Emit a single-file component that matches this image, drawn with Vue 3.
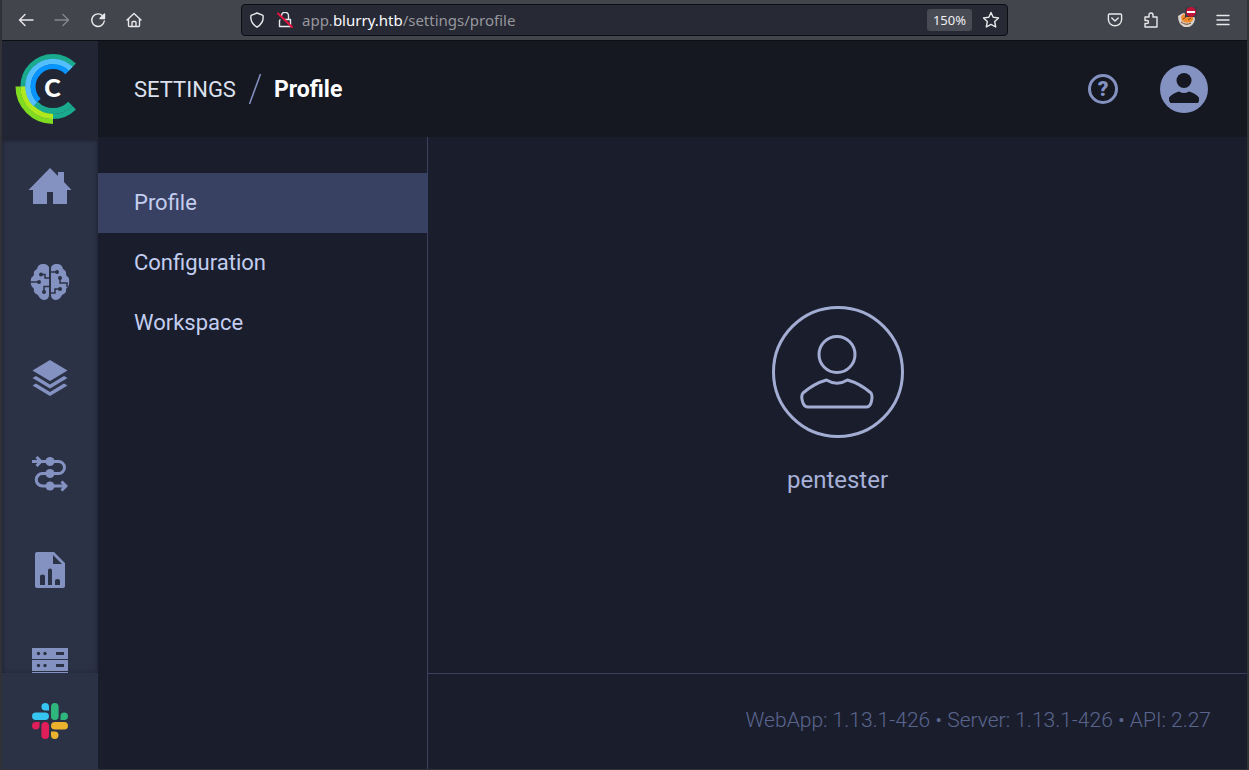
<script setup>
import { ref } from 'vue'

const address = ref('app.blurry.htb/settings/profile')
const pages = ['Profile', 'Configuration', 'Workspace']
const current = ref('Profile')
</script>

<template>
  <div class="window">
    <header class="toolbar">
      <div class="tools">
        <button class="tool" aria-label="Back">
          <svg width="16" height="16" viewBox="0 0 16 16"><path d="M15 8H2M7 2.500L1.500 8L7 13.500" /></svg>
        </button>
        <button class="tool faded" aria-label="Forward">
          <svg width="16" height="16" viewBox="0 0 16 16"><path d="M1 8H14M9 2.500L14.500 8L9 13.500" /></svg>
        </button>
        <button class="tool" aria-label="Reload">
          <svg width="16" height="16" viewBox="0 0 16 16"><path d="M12.800 4A6.300 6.300 0 1 0 14.300 9" /><path class="solid" d="M14.500 2V6.500H10Z" /></svg>
        </button>
        <button class="tool" aria-label="Home">
          <svg width="16" height="16" viewBox="0 0 16 16"><path d="M1 8L8 1.500L15 8M2.500 7V13.500Q2.500 14.500 3.500 14.500H12.500Q13.500 14.500 13.500 13.500V7M6 14.500V10.500Q6 9.500 7 9.500H9Q10 9.500 10 10.500V14.500" /></svg>
        </button>
      </div>

      <div class="address">
        <svg class="glyph" width="16" height="16" viewBox="0 0 16 16"><path d="M8 1L14 3.300Q15.200 10.800 8 15.200Q0.800 10.800 2 3.300Z" /></svg>
        <svg class="glyph lock" width="16" height="16" viewBox="0 0 16 16"><path d="M4.500 4V3.800A3.500 3.500 0 0 1 11.500 3.800V7M3 8Q2.500 8 2.500 8.800V14.500H13.500V7.500H8" /><path class="strike" d="M1 1.500L15 15" /></svg>
        <a class="url" href="#" :aria-label="address">app.<b>blurry.htb</b>/settings/profile</a>
        <button class="zoom">150%</button>
        <button class="tool star" aria-label="Bookmark">
          <svg width="18" height="18" viewBox="0 0 18 18"><path d="M9 1.500L11.200 6.200L16.500 6.900L12.700 10.600L13.700 16L9 13.400L4.300 16L5.300 10.600L1.500 6.900L6.800 6.200Z" /></svg>
        </button>
      </div>

      <div class="tools right">
        <button class="tool" aria-label="Save to Pocket">
          <svg width="16" height="16" viewBox="0 0 16 16"><path d="M2.500 2H13.500Q14.600 2 14.600 3.200V7.500A6.600 6.300 0 0 1 1.400 7.500V3.200Q1.400 2 2.500 2ZM4.800 6L8 9L11.200 6" /></svg>
        </button>
        <button class="tool" aria-label="Extensions">
          <svg width="16" height="16" viewBox="0 0 16 16"><path d="M2 5H6V3Q6 1 8 1T10 3V5H14V15H2V11.500H4Q5.500 11.500 5.500 10T4 8.500H2Z" /></svg>
        </button>
        <button class="tool" aria-label="Proxy switcher">
          <svg width="20" height="22" viewBox="0 0 20 22" class="paint">
            <path d="M1 9L6 6L17 9L18 12Q17 18 12 20H7Q1 17 1 9Z" fill="#d9d3ce" />
            <path d="M4 10L6 7L10 9L16 9Q17 13 14 15Q9 17 5 14Z" fill="#f08c2e" />
            <path d="M6 12L9 10M11 13L14 11M4 15Q9 19 14 16" stroke="#754527" fill="none" />
            <path d="M8 0H20V10H8Z" fill="#3a3d43" />
            <circle cx="14" cy="5" r="5" fill="#c01338" />
            <path d="M10 4H18V6H10Z" fill="#fff" />
          </svg>
        </button>
        <button class="tool" aria-label="Menu">
          <svg width="16" height="16" viewBox="0 0 16 16"><path d="M2 3.500H14M2 8H14M2 12.500H14" /></svg>
        </button>
      </div>
    </header>

    <div class="app">
      <aside class="rail">
        <a class="logo" href="#" aria-label="Dashboard home">
          <svg width="96" height="96" viewBox="2 41 96 96">
            <g fill="none">
              <path d="M74.200 65.300A30 30 0 1 0 74.200 107.700" stroke="#1aaa8d" stroke-width="5" />
              <path d="M70.300 69.200A24.600 24.600 0 0 0 53 61.900" stroke="#1aaa8d" stroke-width="6" />
              <path d="M35.600 103.900A24.600 24.600 0 0 0 70.400 103.900" stroke="#1aaa8d" stroke-width="6.200" />
              <path d="M18 86.500A35 35 0 0 0 53 121.500" stroke="#80dc20" stroke-width="5" />
              <path d="M23 86.500A30 30 0 0 0 53 116.500" stroke="#b0e81e" stroke-width="5.200" />
              <path d="M70.700 68.800A25 25 0 1 0 35.300 104.200" stroke="#53bfff" stroke-width="5.600" />
              <path d="M67.100 72.400A19.900 19.900 0 1 0 38.900 100.600" stroke="#0794ff" stroke-width="5" />
            </g>
            <text class="initial" x="52.500" y="97" text-anchor="middle">C</text>
          </svg>
        </a>

        <nav class="apps">
          <a href="#" aria-label="Home">
            <svg width="44" height="36" viewBox="0 0 44 36"><path d="M22 0L30 8V4H36V14L43.500 22H39V36H25V24H19V36H5V22H.5Z" /></svg>
          </a>
          <a href="#" aria-label="Projects">
            <svg width="40" height="36" viewBox="0 0 40 36">
              <path d="M19 3Q17-.5 13 0Q8 0 7 5Q3 7 4 11Q0 14 1 18Q0 22 4 25Q3 29 8 31Q10 36 15 36Q19 35 19 31ZM21 3Q23-.5 27 0Q32 0 33 5Q37 7 36 11Q40 14 39 18Q40 22 36 25Q37 29 32 31Q30 36 25 36Q21 35 21 31Z" />
              <path class="trace" d="M1 18H9M11 10.500H15V14H19M14 28V22.500H19M21 8H27M30 14V19H37V23M21 29H25V25H30" />
              <g class="node"><circle cx="9" cy="18" r="2" /><circle cx="11" cy="10.500" r="2" /><circle cx="14" cy="28" r="2" /><circle cx="27" cy="8" r="2" /><circle cx="30" cy="14" r="2" /><circle cx="30" cy="25" r="2" /></g>
            </svg>
          </a>
          <a href="#" aria-label="Datasets">
            <svg width="36" height="36" viewBox="0 0 36 36"><path d="M18 0L35.500 10.500L18 21L.5 10.500ZM.5 18L4 16L18 24.500L32 16L35.500 18L18 28.500ZM.5 25.500L4 23.500L18 32L32 23.500L35.500 25.500L18 36Z" /></svg>
          </a>
          <a href="#" aria-label="Pipelines">
            <svg width="36" height="36" viewBox="0 0 36 36">
              <path class="line" d="M0 5.500H26.500A6 6 0 0 1 26.500 17.500H10.500A6.200 6.200 0 0 0 10.500 30H34M4.500 1L9 5.500L4.500 10M29.500 25.500L34 30L29.500 34.500" />
              <circle cx="18" cy="5.500" r="4.500" /><circle cx="18" cy="17.500" r="4.500" /><circle cx="18" cy="30" r="4.500" />
            </svg>
          </a>
          <a href="#" aria-label="Reports">
            <svg width="30" height="36" viewBox="0 0 30 36"><path fill-rule="evenodd" d="M2 0H19L30 11V34Q30 36 28 36H2Q0 36 0 34V2Q0 0 2 0ZM18 3V12H27ZM5 33V24Q5 22.500 7.500 22.500T10 24V33ZM13 33V18Q13 16.500 15 16.500T17 18V33ZM20 33V28.500Q20 27 22.500 27T25 28.500V33Z" /></svg>
          </a>
          <a href="#" aria-label="Workers and queues">
            <svg width="36" height="36" viewBox="0 0 36 36"><path d="M0 0H36V11H0ZM0 12H36V23H0ZM0 24H36V35H0Z" /><path class="node" d="M24 4H32V7H24ZM24 16H32V19H24ZM24 28H32V31H24Z" /><g class="node"><circle cx="6.500" cy="5.500" r="1.700" /><circle cx="13" cy="5.500" r="1.700" /><circle cx="6.500" cy="17.500" r="1.700" /><circle cx="13" cy="17.500" r="1.700" /></g></svg>
          </a>
        </nav>

        <a class="slack" href="#" aria-label="Slack">
          <svg width="36" height="36" viewBox="0 0 36 36">
            <path fill="#36c5f0" d="M13.200 0A3.800 3.800 0 0 1 17 3.800V7.500H13.200A3.750 3.750 0 0 1 13.200 0ZM3.800 9.500H13.200A3.750 3.750 0 0 1 13.200 17H3.800A3.750 3.750 0 0 1 3.800 9.500Z" />
            <path fill="#2eb67d" d="M22.800 0A3.800 3.800 0 0 1 26.600 3.800V13.200A3.800 3.800 0 0 1 19 13.200V3.800A3.800 3.800 0 0 1 22.800 0ZM32.200 9.500A3.750 3.750 0 0 1 32.200 17H28.500V13.200A3.750 3.750 0 0 1 32.200 9.500Z" />
            <path fill="#ecb22e" d="M22.800 19H32.200A3.800 3.800 0 0 1 32.200 26.600H22.800A3.800 3.800 0 0 1 22.800 19ZM19 28.500H22.800A3.750 3.750 0 1 1 19 32.200Z" />
            <path fill="#e01e5a" d="M3.800 19H7.600V22.800A3.800 3.800 0 1 1 3.800 19ZM13.200 19A3.800 3.800 0 0 1 17 22.800V32.200A3.800 3.800 0 0 1 9.400 32.200V22.800A3.800 3.800 0 0 1 13.200 19Z" />
          </svg>
        </a>
      </aside>

      <div class="page">
        <header class="topbar">
          <nav class="crumbs">
            <a href="#">SETTINGS</a>
            <svg width="14" height="32" viewBox="0 0 14 32"><path d="M1.500 31L12.500 1" /></svg>
            <h1>{{ current }}</h1>
          </nav>
          <button class="help" aria-label="Help">?</button>
          <button class="account" aria-label="Account">
            <svg width="48" height="48" viewBox="0 0 48 48"><circle cx="24" cy="24" r="24" /><circle class="cut" cx="24" cy="15.500" r="7.500" /><path class="cut" d="M19 26.500Q24 29.500 29 26.500Q35 28 39 32.500Q39.500 36 38 38H10.500Q8.500 36 9 32.500Q13 28 19 26.500Z" /></svg>
          </button>
        </header>

        <div class="columns">
          <nav class="menu">
            <a v-for="page in pages" :key="page" href="#" :class="{ active: page === current }" @click.prevent="current = page">{{ page }}</a>
          </nav>
          <div class="content">
            <main class="profile">
              <svg width="132" height="132" viewBox="0 0 132 132"><circle cx="66" cy="66" r="64.500" /><circle cx="65" cy="48.500" r="18" /><path d="M54.500 74Q65 80.500 75.500 74Q88 77.500 99 87Q101 90 99 97Q97.500 101 94.500 101H36Q32.500 101 31 97Q28.500 90 31 87Q42 77.500 54.500 74Z" /></svg>
              <p>pentester</p>
            </main>
            <footer class="versions">WebApp: 1.13.1-426 • Server: 1.13.1-426 • API: 2.27</footer>
          </div>
        </div>
      </div>
    </div>
  </div>
</template>

<style>
body {
  margin: 0;
  background: #303237;
}
</style>

<style scoped>
* {
  box-sizing: border-box;
}
a {
  color: inherit;
  text-decoration: none;
}
button {
  margin: 0;
  padding: 0;
  border: 0;
  background: none;
  font: inherit;
  color: inherit;
}
svg {
  display: block;
  flex: none;
}
.window {
  display: flex;
  flex-direction: column;
  height: 100vh;
  padding: 0 2px 1px;
  font-family: Roboto, "Liberation Sans", sans-serif;
}
.toolbar {
  display: flex;
  align-items: center;
  justify-content: space-between;
  height: 41px;
  flex: none;
  border-bottom: 1px solid #0d0e14;
  background: #42454b;
  color: #f0f0f3;
  font-family: "Noto Sans", sans-serif;
}
.tools {
  display: flex;
  flex: 1;
  gap: 4px;
  padding-left: 8px;
}
.right {
  justify-content: flex-end;
  padding: 0 8px 0 0;
}
.tool {
  display: grid;
  place-items: center;
  width: 32px;
  height: 32px;
}
.tool svg:not(.paint),
.glyph {
  fill: none;
  stroke: #e9e9ec;
  stroke-width: 1.4;
  stroke-linejoin: round;
  stroke-linecap: round;
}
.tool .solid {
  fill: #e9e9ec;
}
.paint {
  margin-bottom: 4px;
}
.faded {
  opacity: 0.4;
}
.address {
  display: flex;
  align-items: center;
  width: 62%;
  max-width: 767px;
  height: 32px;
  padding-left: 7px;
  border: 1px solid #0d0e14;
  border-radius: 4px;
  background: #272934;
}
.lock {
  margin: 0 9px 0 12px;
}
.lock .strike {
  stroke: #e6123d;
  stroke-width: 2;
}
.url {
  flex: 1;
  font-size: 15px;
  color: #96979d;
}
.url b {
  font-weight: 400;
  color: #fbfbfe;
}
.zoom {
  height: 22px;
  padding: 0 6px;
  border-radius: 3px;
  background: #484a54;
  font-size: 13px;
}
.star {
  margin-left: 3px;
}
.app {
  display: flex;
  flex: 1;
  min-height: 0;
}
.rail {
  display: flex;
  flex-direction: column;
  width: 96px;
  flex: none;
  background: #2c3246;
}
.logo {
  height: 96px;
  flex: none;
  background: #222634;
}
.initial {
  font-family: Lato, sans-serif;
  font-size: 25px;
  font-weight: 900;
  fill: #fff;
}
.apps {
  flex: 1;
  min-height: 0;
  overflow: hidden;
  padding-top: 1px;
  box-shadow: inset 0 4px 3px #212533, inset 0 0 5px #1f2433;
}
.apps a,
.slack {
  display: grid;
  place-items: center;
  height: 96px;
}
.apps svg {
  fill: #8492c2;
}
.apps .trace {
  fill: none;
  stroke: #2c3246;
  stroke-width: 1.5;
}
.apps .node {
  fill: #2c3246;
}
.apps .line {
  fill: none;
  stroke: #8492c2;
  stroke-width: 3;
}
.slack {
  flex: none;
}
.page {
  display: flex;
  flex: 1;
  flex-direction: column;
  min-width: 0;
}
.topbar {
  display: flex;
  align-items: center;
  height: 96px;
  flex: none;
  padding: 0 39px 0 36px;
  background: #151721;
}
.crumbs {
  display: flex;
  flex: 1;
  align-items: center;
  gap: 12px;
  font-size: 22px;
  color: #dce0ee;
}
.crumbs svg {
  fill: none;
  stroke: #8492c2;
  stroke-width: 1.5;
}
.crumbs h1 {
  margin: 0;
  font-size: 23px;
  font-weight: 700;
  color: #fff;
}
.help {
  width: 30px;
  height: 30px;
  margin-right: 42px;
  border: 3px solid #8492c2;
  border-radius: 50%;
  font-size: 21px;
  font-weight: 900;
  line-height: 24px;
  color: #8492c2;
}
.account svg {
  fill: #8492c2;
}
.account .cut {
  fill: #151721;
}
.columns {
  display: flex;
  flex: 1;
  min-height: 0;
  background: #1a1e2c;
}
.menu {
  width: 330px;
  flex: none;
  padding-top: 36px;
  border-right: 1px solid #3a4160;
}
.menu a {
  display: block;
  padding-left: 36px;
  font-size: 22px;
  line-height: 60px;
  color: #c3cdf0;
}
.menu .active {
  background: #384161;
}
.content {
  display: flex;
  flex: 1;
  flex-direction: column;
  min-width: 0;
}
.profile {
  display: flex;
  flex: 1;
  flex-direction: column;
  align-items: center;
  justify-content: center;
  gap: 24px;
  padding-bottom: 6px;
  font-size: 24px;
  line-height: 36px;
  color: #a8b1d8;
}
.profile svg {
  fill: none;
  stroke: #a3acd3;
  stroke-width: 3;
  stroke-linejoin: round;
}
.profile p {
  margin: 0;
}
.versions {
  height: 96px;
  padding-right: 36px;
  border-top: 1px solid #3a4160;
  font-size: 21px;
  font-weight: 300;
  line-height: 93px;
  text-align: right;
  color: #5a658f;
}
</style>
